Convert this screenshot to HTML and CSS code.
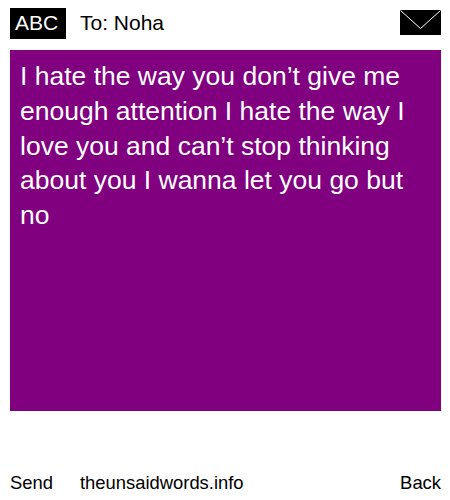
FILE: index.html
```html
<!DOCTYPE html>
<html lang="en">
<head>
<meta charset="utf-8">
<title>To: Noha</title>
<link rel="stylesheet" href="styles.css">
</head>
<body>
<div class="page">
  <header class="head">
    <span class="abc">ABC</span>
    <span class="to">To: Noha</span>
    <svg class="mail" width="41" height="25" viewBox="0 0 41 25" aria-hidden="true">
      <rect width="41" height="25" fill="#000"/>
      <path d="M0.5 0.5 L20.5 18.5 L40.5 0.5" fill="none" stroke="#fff" stroke-width="1"/>
    </svg>
  </header>
  <main class="message">I hate the way you don’t give me enough attention I hate the way I love you and can’t stop thinking about you I wanna let you go but no</main>
  <footer class="foot">
    <span class="send">Send</span>
    <span class="site">theunsaidwords.info</span>
    <span class="back">Back</span>
  </footer>
</div>
</body>
</html>
```
FILE: styles.css
```css
html, body {
  margin: 0;
  padding: 0;
  background: #fff;
}
.page {
  width: 450px;
  height: 500px;
  box-sizing: border-box;
  padding: 8px 9px 0 10px;
  display: flex;
  flex-direction: column;
  font-family: "Liberation Sans", Arial, sans-serif;
  color: #000;
}
.head {
  display: flex;
  align-items: flex-start;
  height: 42px;
  font-size: 21px;
}
.abc {
  width: 56px;
  height: 31px;
  box-sizing: border-box;
  padding-left: 5px;
  line-height: 30px;
  background: #000;
  color: #fff;
}
.to {
  margin-left: 14px;
  line-height: 30px;
  flex: 1;
}
.mail {
  display: block;
  margin: 2px 0 0;
}
.message {
  height: 361px;
  background: #800080;
  color: #fff;
  box-sizing: border-box;
  padding: 9px 10px;
  font-size: 26.5px;
  line-height: 34.75px;
}
.foot {
  display: flex;
  margin-top: 61px;
  font-size: 18.4px;
  line-height: 22px;
}
.send {
  width: 70px;
}
.site {
  flex: 1;
}
```
